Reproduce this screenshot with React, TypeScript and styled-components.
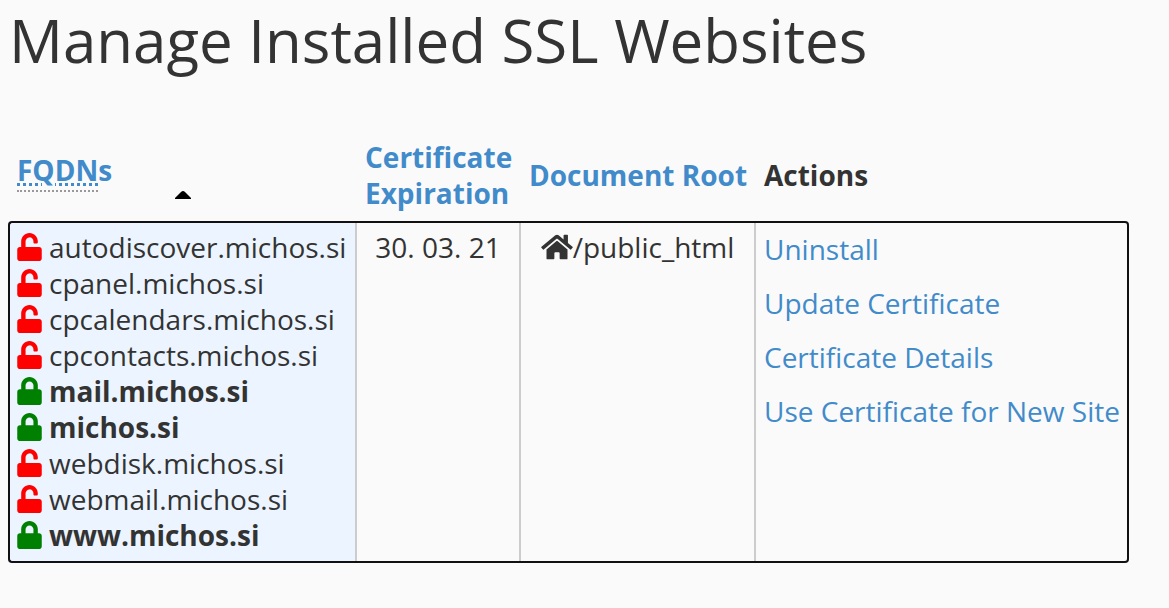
import React from "react";
import styled, { createGlobalStyle } from "styled-components";
import { FaHome, FaLock, FaUnlock } from "react-icons/fa";

const GlobalStyle = createGlobalStyle`
  *, *::before, *::after { box-sizing: border-box; }
  body {
    margin: 0;
    background: #fafafa;
    color: #333;
    font-family: "Open Sans", "Noto Sans", sans-serif;
    font-size: 28px;
    line-height: 36px;
  }
`;

const Page = styled.main`
  padding: 7px 40px 40px 8px;
`;

const Title = styled.h1`
  margin: 0 0 59px;
  padding-left: 1px;
  font-size: 60px;
  line-height: 66px;
  font-weight: 400;
`;

const SiteTable = styled.table`
  width: 100%;
  table-layout: fixed;
  border-collapse: separate;
  border-spacing: 0;
`;

const Column = styled.col<{ $width?: number }>`
  width: ${({ $width }) => ($width ? `${$width}px` : "auto")};
`;

const HeaderCell = styled.th`
  padding: 7px 6px 10px 10px;
  text-align: left;
  vertical-align: middle;
  font-weight: 700;

  &:first-child {
    padding-left: 9px;
  }
`;

const SortLink = styled.a`
  color: #428bca;
  text-decoration: none;
`;

const SortedHeading = styled.div`
  display: flex;
  flex-direction: column;
  gap: 3px;
`;

const Abbreviation = styled.abbr`
  padding-bottom: 1px;
  border-bottom: 2px dotted #999;
  text-decoration: underline dotted 3px;
`;

const SortArrow = styled.svg`
  display: block;
  align-self: center;
  width: 16px;
  height: 8px;
`;

const Cell = styled.td<{ $align?: "left" | "center"; $tinted?: boolean }>`
  padding: 6px 8px 8px 10px;
  vertical-align: top;
  white-space: nowrap;
  text-align: ${({ $align }) => $align ?? "left"};
  background: ${({ $tinted }) => ($tinted ? "#ecf5ff" : "transparent")};
  border: 2px solid #111;
  border-width: 2px 0;
  box-shadow: inset 2px 0 #ccc;

  &:first-child {
    padding-left: 7px;
    border-left-width: 2px;
    border-radius: 4px 0 0 4px;
    box-shadow: none;
  }

  &:last-child {
    border-right-width: 2px;
    border-radius: 0 4px 4px 0;
  }
`;

const PlainList = styled.ul<{ $gap?: number; $top?: number }>`
  display: flex;
  flex-direction: column;
  gap: ${({ $gap }) => $gap ?? 0}px;
  margin: 0;
  padding: ${({ $top }) => $top ?? 0}px 0 0;
  list-style: none;
`;

const Domain = styled.li<{ $secure: boolean }>`
  display: flex;
  align-items: center;
  gap: 7px;
  font-weight: ${({ $secure }) => ($secure ? 700 : 400)};

  svg {
    flex: none;
    width: 25px;
    height: 28px;
    color: ${({ $secure }) => ($secure ? "#008000" : "#ff0000")};
  }
`;

const RootPath = styled.span`
  display: inline-flex;
  align-items: center;

  svg {
    width: 32px;
    height: 28px;
  }
`;

const ActionLink = styled.a`
  color: #428bca;
  text-decoration: none;
`;

const domains = [
  { name: "autodiscover.michos.si", secure: false },
  { name: "cpanel.michos.si", secure: false },
  { name: "cpcalendars.michos.si", secure: false },
  { name: "cpcontacts.michos.si", secure: false },
  { name: "mail.michos.si", secure: true },
  { name: "michos.si", secure: true },
  { name: "webdisk.michos.si", secure: false },
  { name: "webmail.michos.si", secure: false },
  { name: "www.michos.si", secure: true },
];

const actions = [
  "Uninstall",
  "Update Certificate",
  "Certificate Details",
  "Use Certificate for New Site",
];

export default function App() {
  return (
    <>
      <GlobalStyle />
      <Page>
        <Title>Manage Installed SSL Websites</Title>
        <SiteTable>
          <colgroup>
            <Column $width={347} />
            <Column $width={164} />
            <Column $width={235} />
            <Column />
          </colgroup>
          <thead>
            <tr>
              <HeaderCell scope="col" aria-sort="ascending">
                <SortedHeading>
                  <SortLink href="#fqdns">
                    <Abbreviation>FQDN</Abbreviation>s
                  </SortLink>
                  <SortArrow viewBox="0 0 16 8" aria-hidden="true">
                    <path d="M0 8V7L6 1Q8-1 10 1L16 7V8Z" fill="#000" />
                  </SortArrow>
                </SortedHeading>
              </HeaderCell>
              <HeaderCell scope="col">
                <SortLink href="#expiration">Certificate Expiration</SortLink>
              </HeaderCell>
              <HeaderCell scope="col">
                <SortLink href="#root">Document Root</SortLink>
              </HeaderCell>
              <HeaderCell scope="col">Actions</HeaderCell>
            </tr>
          </thead>
          <tbody>
            <tr>
              <Cell $tinted>
                <PlainList>
                  {domains.map(({ name, secure }) => (
                    <Domain key={name} $secure={secure}>
                      {secure ? <FaLock /> : <FaUnlock />}
                      {name}
                    </Domain>
                  ))}
                </PlainList>
              </Cell>
              <Cell $align="center">30. 03. 21</Cell>
              <Cell $align="center">
                <RootPath>
                  <FaHome />
                  /public_html
                </RootPath>
              </Cell>
              <Cell>
                <PlainList $gap={18} $top={2}>
                  {actions.map((label) => (
                    <li key={label}>
                      <ActionLink href="#action">{label}</ActionLink>
                    </li>
                  ))}
                </PlainList>
              </Cell>
            </tr>
          </tbody>
        </SiteTable>
      </Page>
    </>
  );
}
